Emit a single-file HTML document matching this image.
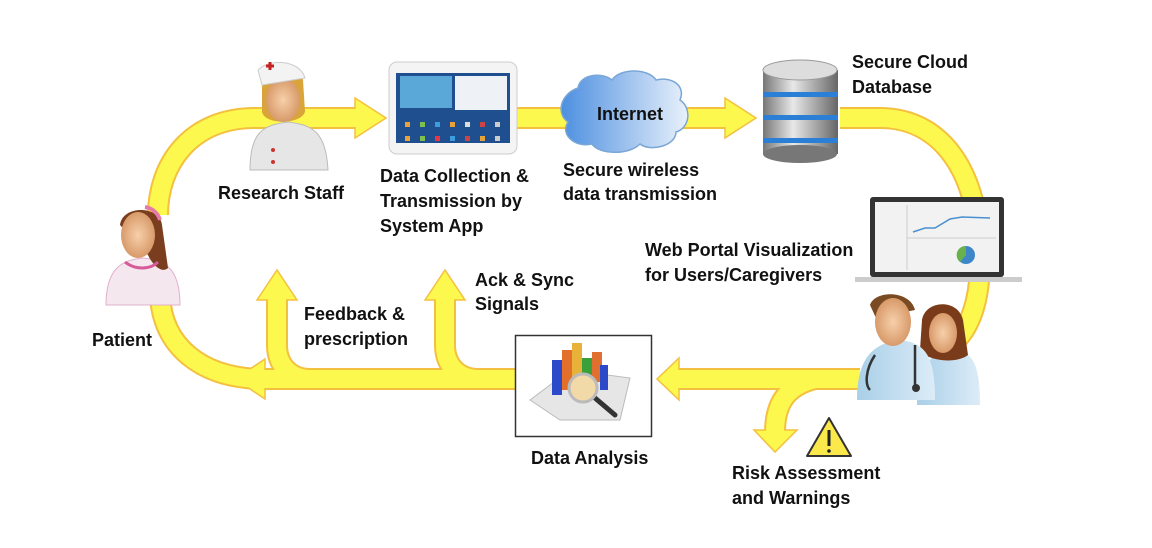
<!DOCTYPE html>
<html><head><meta charset="utf-8"><style>
html,body{margin:0;padding:0;background:#fff;}
svg{display:block}
text{font-family:"Liberation Sans",sans-serif;font-weight:bold;font-size:18px;fill:#111;}
</style></head><body>
<svg width="1152" height="548" viewBox="0 0 1152 548" xmlns="http://www.w3.org/2000/svg">
<defs>
<linearGradient id="cl" x1="0" x2="1"><stop offset="0" stop-color="#4d8fe0"/><stop offset="1" stop-color="#e9f1fb"/></linearGradient>
<linearGradient id="db" x1="0" x2="1"><stop offset="0" stop-color="#777"/><stop offset=".4" stop-color="#e8e8e8"/><stop offset="1" stop-color="#666"/></linearGradient>
<linearGradient id="coat" x1="0" x2="1"><stop offset="0" stop-color="#a9cfe8"/><stop offset="1" stop-color="#dcecf7"/></linearGradient>
<radialGradient id="skin"><stop offset="0" stop-color="#f7d0aa"/><stop offset="1" stop-color="#d89a6a"/></radialGradient>
</defs>
<g fill="none" stroke="#f3c040" stroke-width="22">
<path d="M360,118 H255 C190,118 158,165 158,215"/>
<path d="M160,295 C162,345 200,379 265,379"/>
<path d="M520,379 H262"/>
<path d="M277,298 V345 C277,365 290,379 310,379"/>
<path d="M445,298 V345 C445,365 458,379 478,379"/>
<path d="M515,118 H730"/>
<path d="M840,118 H880 C940,118 980,170 980,260 C980,310 965,335 950,345"/>
<path d="M860,379 H676"/>
<path d="M815,379 C790,385 775,400 775,432"/>
</g>
<g fill="#fdf84e" stroke="#f3c040" stroke-width="1.5">
<polygon points="355,98 386,118 355,138"/>
<polygon points="725,98 756,118 725,138"/>
<polygon points="265,359 235,379 265,399"/>
<polygon points="679,358 657,379 679,400"/>
<polygon points="257,300 277,270 297,300"/>
<polygon points="425,300 445,270 465,300"/>
<polygon points="754,430 775,452 797,430"/>
</g>
<g fill="none" stroke="#fdf84e" stroke-width="18">
<path d="M357,118 H255 C190,118 158,165 158,215"/>
<path d="M160,295 C162,345 200,379 265,379"/>
<path d="M520,379 H262"/>
<path d="M277,296 V345 C277,365 290,379 310,379"/>
<path d="M445,296 V345 C445,365 458,379 478,379"/>
<path d="M515,118 H727"/>
<path d="M840,118 H880 C940,118 980,170 980,260 C980,310 965,335 950,345"/>
<path d="M860,379 H677"/>
<path d="M815,379 C790,385 775,400 775,432"/>
</g>

<g>
<path d="M250,170 C250,130 265,125 288,122 C311,125 326,130 328,170 Z" fill="#e6e6e6" stroke="#bbb"/>
<path d="M262,88 C262,70 300,66 303,80 L305,112 C300,125 265,125 262,112 Z" fill="#d9a53a"/>
<ellipse cx="283" cy="100" rx="17" ry="22" fill="url(#skin)"/>
<path d="M258,70 C270,58 300,60 305,78 L262,85 Z" fill="#f3f3f3" stroke="#ccc"/>
<path d="M266,66 h8 M270,62 v8" stroke="#c62020" stroke-width="3"/>
<circle cx="273" cy="150" r="2" fill="#c33"/><circle cx="273" cy="162" r="2" fill="#c33"/>
</g>
<rect x="389" y="62" width="128" height="92" rx="8" fill="#f4f4f4" stroke="#ccc"/>
<rect x="396" y="73" width="114" height="70" fill="#1f4f8f"/>
<rect x="455" y="76" width="52" height="34" fill="#eef2f6"/>
<rect x="400" y="76" width="52" height="32" fill="#5aa8d8"/>
<g fill="#e8a23a"><rect x="405" y="122" width="5" height="5"/><rect x="420" y="122" width="5" height="5" fill="#7fbf4f"/><rect x="435" y="122" width="5" height="5" fill="#3c9ee0"/><rect x="450" y="122" width="5" height="5"/><rect x="465" y="122" width="5" height="5" fill="#ddd"/><rect x="480" y="122" width="5" height="5" fill="#c44"/><rect x="495" y="122" width="5" height="5" fill="#ccc"/>
<rect x="405" y="136" width="5" height="5"/><rect x="420" y="136" width="5" height="5" fill="#7fbf4f"/><rect x="435" y="136" width="5" height="5" fill="#e34"/><rect x="450" y="136" width="5" height="5" fill="#3c9ee0"/><rect x="465" y="136" width="5" height="5" fill="#c44"/><rect x="480" y="136" width="5" height="5"/><rect x="495" y="136" width="5" height="5" fill="#ccc"/></g>
<path d="M578,88 C580,74 602,72 612,80 C620,68 648,68 656,80 C672,76 686,86 680,100 C692,108 690,128 676,132 C676,146 650,152 640,144 C628,156 598,154 592,144 C574,148 560,134 568,122 C556,114 560,94 578,88 Z" fill="url(#cl)" stroke="#7aa6d6" stroke-width="1.5"/>
<text x="597" y="120" font-size="18">Internet</text>
<g>
<rect x="763" y="70" width="75" height="84" fill="url(#db)"/>
<ellipse cx="800" cy="154" rx="37" ry="9" fill="#777"/>
<rect x="763" y="92" width="75" height="5" fill="#2b7fd6"/>
<rect x="763" y="115" width="75" height="5" fill="#2b7fd6"/>
<rect x="763" y="138" width="75" height="5" fill="#2b7fd6"/>
<ellipse cx="800" cy="70" rx="37" ry="10" fill="#ddd" stroke="#999"/>
</g>
<rect x="870" y="197" width="134" height="80" rx="3" fill="#333"/>
<rect x="875" y="202" width="124" height="70" fill="#f2f2f2"/>
<line x1="907" y1="205" x2="907" y2="270" stroke="#ccc"/>
<line x1="907" y1="238" x2="996" y2="238" stroke="#ccc"/>
<polyline points="913,232 925,228 935,228 950,219 962,217 990,218" fill="none" stroke="#4a90d0" stroke-width="1.5"/>
<circle cx="966" cy="255" r="9" fill="#3d87c9"/><path d="M966,255 L966,246 A9,9 0 0 0 960,262 Z" fill="#6ab04c"/>
<rect x="855" y="277" width="167" height="5" fill="#ccc"/>
<g>
<path d="M917,405 C917,360 935,352 955,350 C975,352 980,370 980,405 Z" fill="url(#coat)"/>
<path d="M922,320 C925,300 958,298 963,320 L968,355 C955,365 925,360 920,350 Z" fill="#7a3b1a"/>
<ellipse cx="943" cy="333" rx="14" ry="20" fill="url(#skin)"/>
<path d="M857,400 C857,350 880,343 900,340 C925,343 935,355 935,400 Z" fill="url(#coat)"/>
<path d="M870,305 C875,290 910,290 915,310 L905,312 C895,300 880,305 876,318 Z" fill="#7a4a22"/>
<ellipse cx="893" cy="322" rx="18" ry="24" fill="url(#skin)"/>
<path d="M875,355 C865,370 865,385 870,390 M915,345 V385" stroke="#333" stroke-width="2.5" fill="none"/>
<circle cx="916" cy="388" r="4" fill="#333"/>
</g>
<g>
<path d="M106,305 C106,265 125,260 143,258 C162,260 180,265 180,305 Z" fill="#f4e8ee" stroke="#e0b0cc"/>
<path d="M120,225 C122,205 160,205 162,225 L168,268 C160,275 150,260 148,255 Z" fill="#7a3d1d"/>
<ellipse cx="138" cy="235" rx="17" ry="23" fill="url(#skin)"/>
<path d="M145,207 C152,208 158,213 160,220" stroke="#e57aa8" stroke-width="4" fill="none"/>
<path d="M125,262 C135,270 150,270 158,262" stroke="#d75a9a" stroke-width="3" fill="none"/>
</g>
<rect x="515.5" y="335.5" width="136" height="101" fill="#fff" stroke="#333" stroke-width="1.5"/>
<polygon points="530,400 570,370 630,378 620,420 560,420" fill="#e6e6e6" stroke="#bbb"/>
<rect x="552" y="360" width="10" height="35" fill="#2b49c9"/>
<rect x="562" y="350" width="10" height="40" fill="#e2702a"/>
<rect x="572" y="343" width="10" height="40" fill="#e8b13a"/>
<rect x="582" y="358" width="10" height="30" fill="#3aa03a"/>
<rect x="592" y="352" width="10" height="30" fill="#e07030"/>
<rect x="600" y="365" width="8" height="25" fill="#2b49c9"/>
<line x1="595" y1="398" x2="615" y2="415" stroke="#333" stroke-width="5" stroke-linecap="round"/>
<circle cx="583" cy="388" r="14" fill="#f2d9a8" stroke="#bbb" stroke-width="3"/>
<polygon points="829,418 851,456 807,456" fill="#fbe94c" stroke="#333" stroke-width="2" stroke-linejoin="round"/>
<line x1="829" y1="430" x2="829" y2="446" stroke="#222" stroke-width="3"/>
<circle cx="829" cy="451" r="1.8" fill="#222"/>
<text x="218" y="199">Research Staff</text>
<text x="380" y="182">Data Collection &amp;</text>
<text x="380" y="207">Transmission by</text>
<text x="380" y="232">System App</text>
<text x="563" y="176">Secure wireless</text>
<text x="563" y="200">data transmission</text>
<text x="852" y="68">Secure Cloud</text>
<text x="852" y="93">Database</text>
<text x="645" y="256">Web Portal Visualization</text>
<text x="645" y="281">for Users/Caregivers</text>
<text x="475" y="286">Ack &amp; Sync</text>
<text x="475" y="310">Signals</text>
<text x="304" y="320">Feedback &amp;</text>
<text x="304" y="345">prescription</text>
<text x="92" y="346">Patient</text>
<text x="531" y="464">Data Analysis</text>
<text x="732" y="479">Risk Assessment</text>
<text x="732" y="504">and Warnings</text>
</svg>
</body></html>
